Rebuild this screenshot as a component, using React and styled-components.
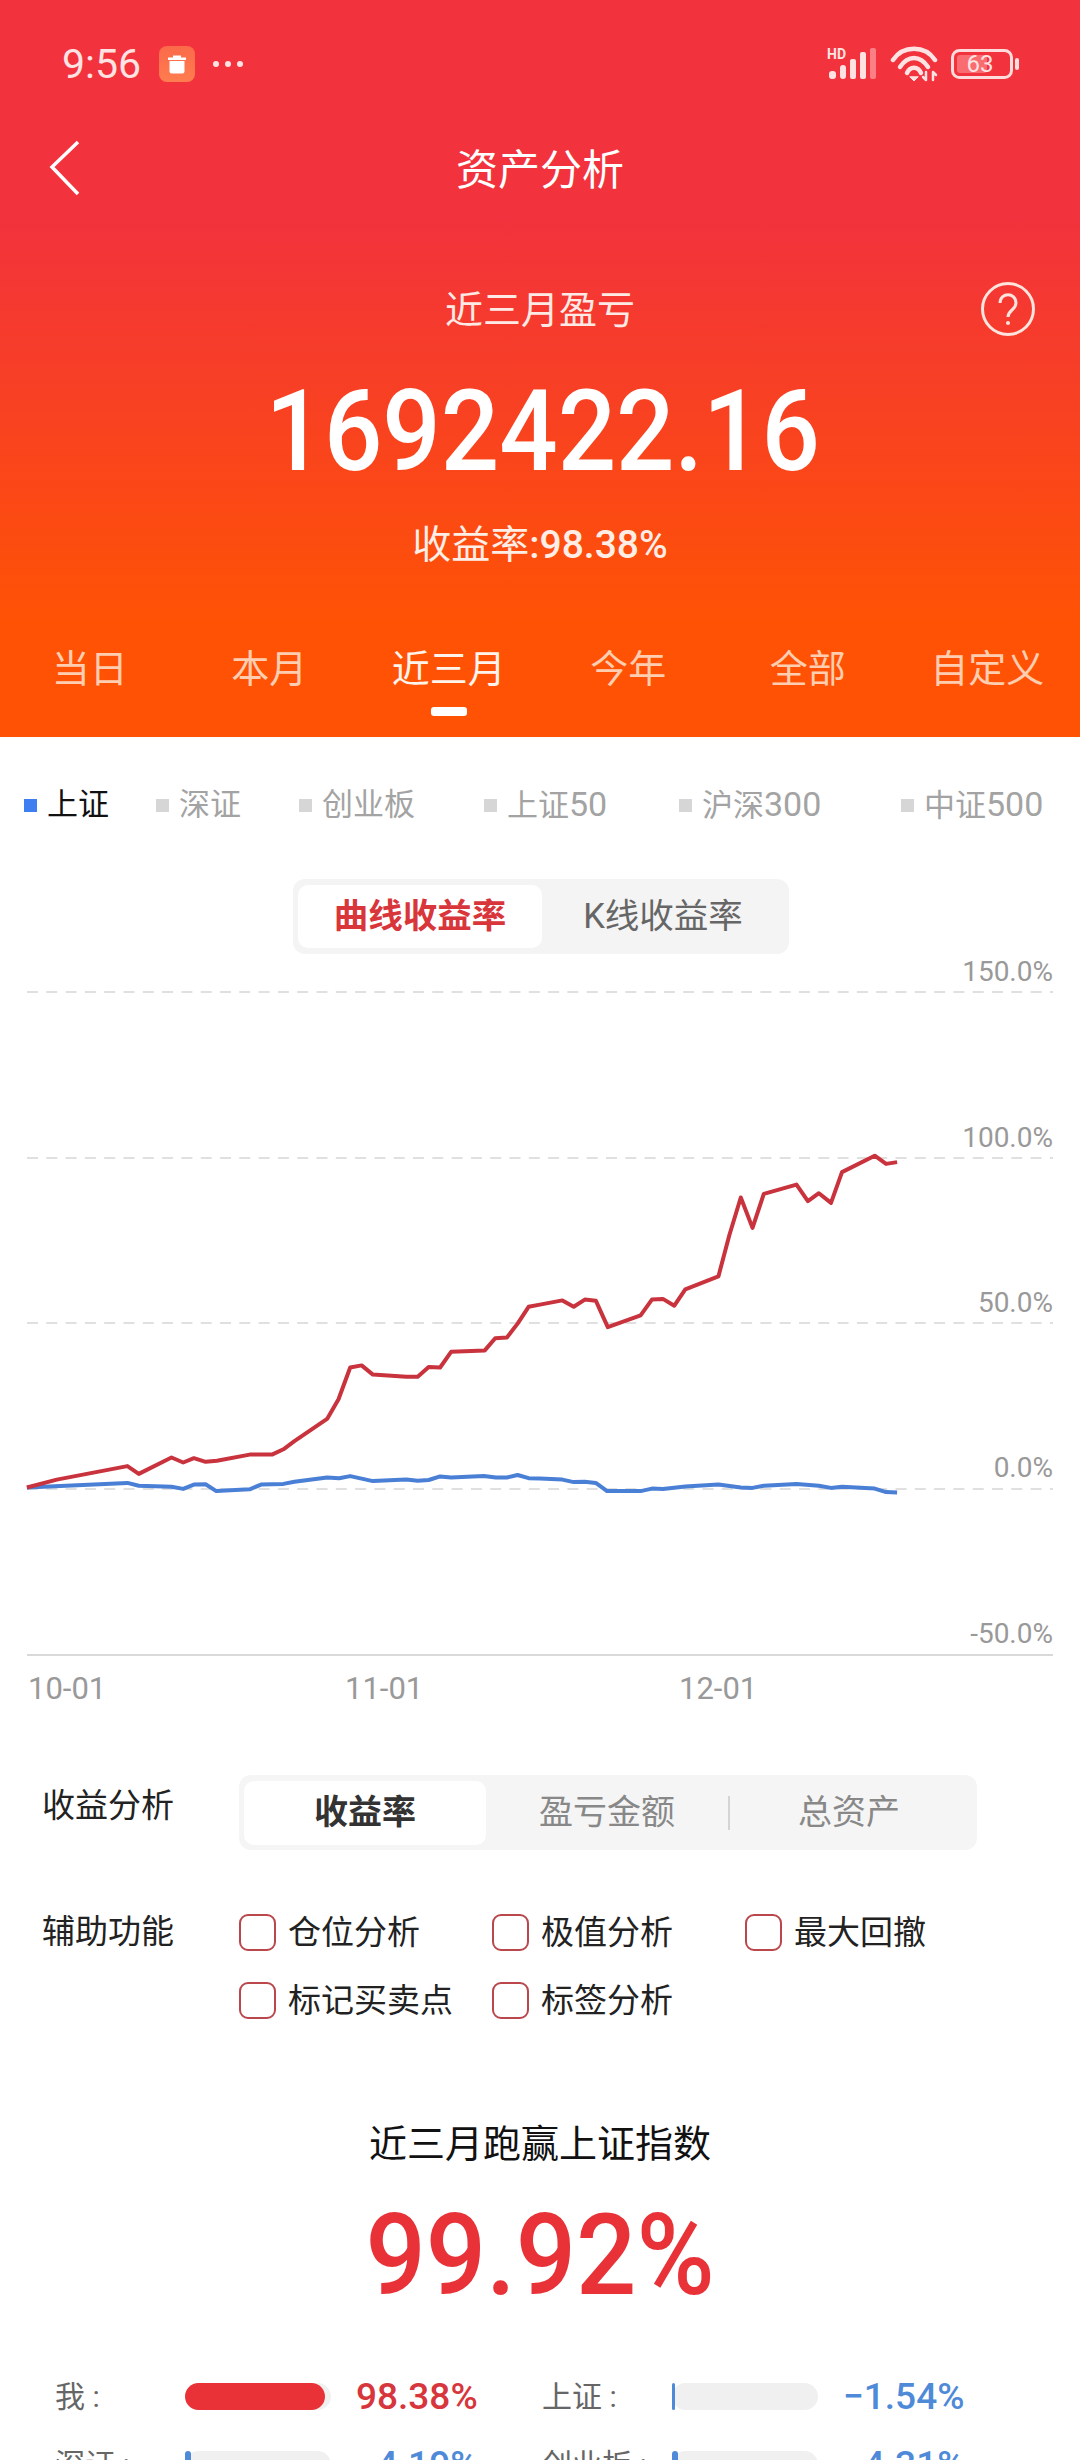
import React from "react";
import styled, { createGlobalStyle } from "styled-components";

const GlobalStyle = createGlobalStyle`
  html, body {
    margin: 0;
    padding: 0;
    background: #fff;
    overflow: hidden;
  }
  body {
    font-family: Roboto, "Noto Sans CJK SC", sans-serif;
  }
  * {
    box-sizing: border-box;
  }
`;

const Page = styled.div`
  width: 1080px;
  height: 2460px;
  overflow: hidden;
  background: #fff;
`;

const Hero = styled.header`
  height: 737px;
  color: #fff;
  background: linear-gradient(180deg, #f2323c 0, #f2323c 220px, #ff5205 620px);
`;

const StatusBar = styled.div`
  height: 128px;
  padding: 0 61px 0 62px;
  display: flex;
  align-items: center;
  justify-content: space-between;
  color: #ffe3e3;
`;

const StatusLeft = styled.div`
  display: flex;
  align-items: center;
`;

const Time = styled.span`
  font-size: 41px;
  line-height: 40px;
  width: 97px;
`;

const AppBadge = styled.span`
  width: 36px;
  height: 36px;
  border-radius: 8px;
  background: linear-gradient(180deg, #fb6a4a, #ff7d4f);
  display: flex;
`;

const Dots = styled.span`
  display: flex;
  gap: 6px;
  margin-left: 18px;
`;

const Dot = styled.i`
  width: 6px;
  height: 6px;
  border-radius: 50%;
  background: #ffe3e3;
`;

const StatusRight = styled.div`
  display: flex;
  align-items: center;
  gap: 13px;
`;

const Nav = styled.div`
  height: 80px;
  display: grid;
  grid-template-columns: 1fr auto 1fr;
  align-items: center;
`;

const BackLink = styled.span`
  display: flex;
  padding-left: 49px;
`;

const NavTitle = styled.h1`
  margin: 6px 0 0;
  font-size: 42px;
  font-weight: 400;
  line-height: 60px;
`;

const SummaryRow = styled.div`
  margin-top: 70px;
  height: 60px;
  display: grid;
  grid-template-columns: 1fr auto 1fr;
  align-items: center;
`;

const SummaryLabel = styled.div`
  grid-column: 2;
  padding-top: 2px;
  font-size: 38px;
  line-height: 60px;
  color: #ffe9e4;
`;

const HelpIcon = styled.svg`
  justify-self: end;
  margin-right: 44px;
  width: 56px;
  height: 56px;
`;

const Amount = styled.div`
  margin-top: 34px;
  padding-left: 6px;
  height: 120px;
  font-size: 113px;
  font-weight: 500;
  line-height: 120px;
  text-align: center;
  transform: scaleX(0.91);
`;

const Rate = styled.div`
  margin-top: 28px;
  height: 50px;
  font-size: 39px;
  font-weight: 500;
  line-height: 50px;
  text-align: center;
  color: #ffeee6;
`;

const RateLabel = styled.span`
  font-weight: 400;
`;

const Tabs = styled.nav`
  margin-top: 69px;
  display: grid;
  grid-template-columns: repeat(6, 179.500px);
`;

const Tab = styled.div`
  display: flex;
  flex-direction: column;
  align-items: center;
  gap: 8px;
  font-size: 38px;
  line-height: 60px;
  color: ${props => (props.$active ? "#fff4ec" : "#ffcdb0")};
`;

const TabMark = styled.i`
  width: 36px;
  height: 9px;
  border-radius: 3px;
  background: ${props => (props.$active ? "#fff" : "transparent")};
`;

const Legend = styled.div`
  margin-top: 48px;
  height: 40px;
  padding-left: 24px;
  display: flex;
  align-items: center;
`;

const LegendItem = styled.div`
  width: ${props => props.$width}px;
  flex: none;
  display: flex;
  align-items: center;
  gap: 10px;
  font-size: 31px;
  line-height: 40px;
  color: ${props => (props.$active ? "#111" : "#a3a3a3")};
`;

const LegendNumber = styled.span`
  font-size: 34px;
`;

const LegendSwatch = styled.i`
  width: 13px;
  height: 13px;
  background: ${props => (props.$active ? "#3f7ef0" : "#d6d6d6")};
`;

const ChartSwitch = styled.div`
  margin: 54px 0 0 293px;
  width: 496px;
  height: 75px;
  padding: 6px 5px;
  border-radius: 12px;
  background: #f4f4f4;
  display: grid;
  grid-template-columns: 244px 1fr;
`;

const ChartOption = styled.div`
  border-radius: 10px;
  font-size: 34.500px;
  font-weight: ${props => (props.$active ? 700 : 400)};
  line-height: 63px;
  text-align: center;
  color: ${props => (props.$active ? "#d8363b" : "#666")};
  background: ${props => (props.$active ? "#fff" : "transparent")};
`;

const Chart = styled.svg`
  display: block;
  width: 1080px;
  height: 756px;
`;

const AxisLabel = styled.text`
  font-family: Roboto, sans-serif;
  font-size: ${props => props.$size}px;
  fill: #999;
`;

const ControlRow = styled.div`
  display: grid;
  grid-template-columns: 239px 738px;
  margin-top: ${props => props.$top}px;
`;

const ControlLabel = styled.div`
  padding-left: 42px;
  font-size: 33px;
  line-height: ${props => props.$line}px;
  color: #222;
`;

const Segments = styled.div`
  height: 75px;
  padding: 5px;
  border-radius: 12px;
  background: #f5f5f5;
  display: grid;
  grid-template-columns: repeat(3, 242px);
  align-items: center;
`;

const Segment = styled.div`
  height: 64px;
  border-radius: 10px;
  font-size: 34px;
  font-weight: ${props => (props.$active ? 700 : 400)};
  line-height: 62px;
  text-align: center;
  color: ${props => (props.$active ? "#333" : "#888")};
  background: ${props => (props.$active ? "#fff" : "transparent")};
  position: relative;
  &::before {
    content: "";
    display: ${props => (props.$split ? "block" : "none")};
    position: absolute;
    left: 0;
    top: 15px;
    height: 34px;
    width: 2px;
    background: #d4d4d4;
  }
`;

const CheckGrid = styled.div`
  display: grid;
  grid-template-columns: repeat(3, 253px);
  grid-auto-rows: 68px;
`;

const CheckItem = styled.label`
  display: flex;
  align-items: center;
  gap: 12px;
  font-size: 33px;
  color: #222;
`;

const CheckText = styled.span`
  margin-bottom: 5px;
`;

const CheckBox = styled.i`
  width: 37px;
  height: 37px;
  border: 2px solid #b9474c;
  border-radius: 9px;
`;

const BeatTitle = styled.div`
  margin-top: 85px;
  height: 50px;
  font-size: 38px;
  line-height: 50px;
  text-align: center;
  color: #111;
`;

const BeatValue = styled.div`
  margin-top: 22px;
  height: 130px;
  font-size: 113px;
  font-weight: 500;
  line-height: 130px;
  text-align: center;
  color: #e83238;
  transform: scaleX(0.94);
`;

const Stats = styled.div`
  margin-top: 62px;
  padding-left: 55px;
  display: grid;
  grid-template-columns: 487px 486px;
  grid-auto-rows: 27px;
  row-gap: 41px;
`;

const Stat = styled.div`
  display: grid;
  grid-template-columns: 130px 146px 1fr;
  grid-template-rows: 27px;
  align-items: center;
`;

const StatName = styled.span`
  font-size: 30px;
  line-height: 40px;
  color: #666;
`;

const Track = styled.div`
  height: 27px;
  border-radius: 14px;
  background: #f0f0f0;
`;

const Fill = styled.div`
  height: 100%;
  border-radius: 14px;
  background: ${props => props.$color};
`;

const StatValue = styled.span`
  padding-left: 25px;
  font-size: 37px;
  font-weight: 500;
  line-height: 40px;
  white-space: nowrap;
  color: ${props => props.$color};
`;

// points read off the chart, x and y scaled back to page pixels further down
const redLeft = [[78,1477],[165,1455],[370,1417],[403,1439],[498,1393],[532,1407],[563,1395],[597,1405],[630,1402],[725,1385],[790,1385],[823,1370],[855,1347],[950,1285],[983,1230],[1017,1141],[1050,1135],[1083,1161],[1180,1167],[1213,1167],[1245,1140],[1278,1141],[1310,1097],[1408,1093],[1438,1059],[1472,1057],[1503,1018],[1535,971],[1568,965]];
const redRight = [[65,953],[98,971],[130,951],[162,954],[197,1028],[292,995],[325,951],[357,949],[390,968],[422,922],[518,886],[550,770],[583,665],[617,750],[650,655],[745,629],[778,675],[810,653],[845,680],[877,594],[972,548],[1005,571],[1037,566]];
const blueLeft = [[78,1477],[370,1464],[403,1472],[498,1475],[532,1481],[563,1469],[597,1468],[628,1487],[725,1482],[758,1469],[823,1467],[855,1461],[950,1449],[985,1451],[1017,1445],[1083,1459],[1180,1455],[1213,1458],[1245,1456],[1278,1446],[1310,1449],[1405,1445],[1440,1449],[1472,1449],[1503,1442],[1535,1451],[1568,1452]];
const blueRight = [[65,1455],[98,1462],[130,1461],[162,1464],[195,1487],[292,1487],[325,1480],[357,1481],[422,1474],[518,1469],[583,1477],[617,1478],[650,1472],[745,1467],[810,1472],[845,1478],[877,1475],[972,1480],[1005,1490],[1037,1491]];

const toLine = (left, right) =>
  [
    ...left.map(([x, y]) => [x / 2.904, 960 + y / 2.8]),
    ...right.map(([x, y]) => [540 + x / 2.904, 960 + y / 2.8])
  ]
    .map(([x, y]) => `${x.toFixed(1)},${y.toFixed(1)}`)
    .join(" ");

const legend = [
  { name: "上证", width: 132, active: true },
  { name: "深证", width: 143 },
  { name: "创业板", width: 185 },
  { name: "上证", number: "50", width: 195 },
  { name: "沪深", number: "300", width: 222 },
  { name: "中证", number: "500", width: 150 }
];

const periods = ["当日", "本月", "近三月", "今年", "全部", "自定义"];
const gridLines = [992, 1158, 1323, 1489];
const yTicks = [
  ["150.0%", 981],
  ["100.0%", 1147],
  ["50.0%", 1312],
  ["0.0%", 1477],
  ["-50.0%", 1643]
];
const xTicks = [
  ["10-01", 28],
  ["11-01", 345],
  ["12-01", 679]
];
const checks = ["仓位分析", "极值分析", "最大回撤", "标记买卖点", "标签分析"];
const stats = [
  { name: "我 :", value: "98.38%", fill: 140, color: "#e83238", text: "#d6363c" },
  { name: "上证 :", value: "−1.54%", fill: 3, color: "#4f8ad9", text: "#4f8ad9" },
  { name: "深证 :", value: "−4.19%", fill: 6, color: "#4f8ad9", text: "#4f8ad9" },
  { name: "创业板 :", value: "−4.31%", fill: 6, color: "#4f8ad9", text: "#4f8ad9" }
];

const TrashIcon = () => (
  <svg width="36" height="36" viewBox="0 0 36 36">
    <path d="M14 9.500h8v2h5v2.500H9v-2.500h5z" fill="#fff" />
    <path d="M10.500 15h15v10.500a2 2 0 0 1-2 2h-11a2 2 0 0 1-2-2z" fill="#fff" />
  </svg>
);

const SignalIcon = () => (
  <svg width="50" height="34" viewBox="0 0 50 34">
    <text x="0" y="12" fontFamily="Roboto" fontWeight="700" fontSize="14" fill="#ffe3e3">HD</text>
    <rect x="2" y="24" width="7" height="8" rx="3" fill="#ffe3e3" />
    <rect x="13" y="18" width="6" height="14" rx="3" fill="#ffe3e3" />
    <rect x="23" y="12" width="6" height="20" rx="2" fill="#ffe3e3" />
    <rect x="33" y="5" width="6" height="27" rx="2" fill="#ffe3e3" />
    <rect x="43" y="1" width="6" height="31" rx="2" fill="#fb7f84" />
  </svg>
);

const WifiIcon = () => (
  <svg width="48" height="36" viewBox="0 0 48 36" fill="none" stroke="#ffe3e3" strokeWidth="4.500" strokeLinecap="round">
    <path d="M3 14 C13 -1 35 -1 45 14" />
    <path d="M10 21 C18 9 30 9 38 21" />
    <path d="M17 27 C20 20 28 20 31 27" />
    <path d="M20 31 L24 35 L28 31 Z" fill="#ffe3e3" strokeWidth="1" />
    <path d="M36 26 v8 M36 34 l-3 -3 M43 34 v-8 M43 26 l3 3" strokeWidth="2.500" />
  </svg>
);

const BatteryIcon = () => (
  <svg width="68" height="30" viewBox="0 0 68 30">
    <rect x="1.500" y="1.500" width="59" height="27" rx="7" fill="none" stroke="#ffdcdc" strokeWidth="3" />
    <rect x="6" y="6" width="30" height="18" rx="3" fill="#f96c70" />
    <text x="29" y="23" textAnchor="middle" fontFamily="Roboto" fontSize="24" fill="#ffe3e3">63</text>
    <rect x="64" y="9" width="4" height="12" rx="2" fill="#ffdcdc" />
  </svg>
);

const BackIcon = () => (
  <svg width="32" height="56" viewBox="0 0 32 56" fill="none" stroke="#fff" strokeWidth="3.500">
    <path d="M29 2 L3 27 L29 54" />
  </svg>
);

const App = () => {
  return (
    <>
      <GlobalStyle />
      <Page>
        <Hero>
          <StatusBar>
            <StatusLeft>
              <Time>9:56</Time>
              <AppBadge>
                <TrashIcon />
              </AppBadge>
              <Dots>
                <Dot />
                <Dot />
                <Dot />
              </Dots>
            </StatusLeft>
            <StatusRight>
              <SignalIcon />
              <WifiIcon />
              <BatteryIcon />
            </StatusRight>
          </StatusBar>
          <Nav>
            <BackLink>
              <BackIcon />
            </BackLink>
            <NavTitle>资产分析</NavTitle>
          </Nav>
          <SummaryRow>
            <SummaryLabel>近三月盈亏</SummaryLabel>
            <HelpIcon viewBox="0 0 56 56" fill="none" stroke="#ffe3dd" strokeWidth="3">
              <circle cx="28" cy="28" r="25.500" />
              <path d="M20 22 C20 11 36 11 36 22 C36 29 28 29 28 36" />
              <circle cx="28" cy="42" r="2" fill="#ffe3dd" stroke="none" />
            </HelpIcon>
          </SummaryRow>
          <Amount>1692422.16</Amount>
          <Rate>
            <RateLabel>收益率</RateLabel>:98.38%
          </Rate>
          <Tabs>
            {periods.map(period => (
              <Tab key={period} $active={period === "近三月"}>
                {period}
                <TabMark $active={period === "近三月"} />
              </Tab>
            ))}
          </Tabs>
        </Hero>

        <Legend>
          {legend.map(item => (
            <LegendItem key={item.name + (item.number || "")} $width={item.width} $active={item.active}>
              <LegendSwatch $active={item.active} />
              <span>
                {item.name}
                {item.number && <LegendNumber>{item.number}</LegendNumber>}
              </span>
            </LegendItem>
          ))}
        </Legend>

        <ChartSwitch>
          <ChartOption $active>曲线收益率</ChartOption>
          <ChartOption>K线收益率</ChartOption>
        </ChartSwitch>

        <Chart viewBox="0 954 1080 756">
          {gridLines.map(y => (
            <line key={y} x1="27" x2="1053" y1={y} y2={y} stroke="#e0e0e0" strokeWidth="2" strokeDasharray="11 8.300" />
          ))}
          <line x1="27" x2="1053" y1="1655" y2="1655" stroke="#d9d9d9" strokeWidth="2" />
          {yTicks.map(([label, y]) => (
            <AxisLabel key={label} $size={28} x="1053" y={y} textAnchor="end">
              {label}
            </AxisLabel>
          ))}
          {xTicks.map(([label, x]) => (
            <AxisLabel key={label} $size={31} x={x} y="1699">
              {label}
            </AxisLabel>
          ))}
          <polyline points={toLine(blueLeft, blueRight)} fill="none" stroke="#4a7fd6" strokeWidth="4" strokeLinejoin="round" />
          <polyline points={toLine(redLeft, redRight)} fill="none" stroke="#c8333d" strokeWidth="4" strokeLinejoin="round" />
        </Chart>

        <ControlRow $top={65}>
          <ControlLabel $line={62}>收益分析</ControlLabel>
          <Segments>
            <Segment $active>收益率</Segment>
            <Segment>盈亏金额</Segment>
            <Segment $split>总资产</Segment>
          </Segments>
        </ControlRow>

        <ControlRow $top={48}>
          <ControlLabel $line={68}>辅助功能</ControlLabel>
          <CheckGrid>
            {checks.map(check => (
              <CheckItem key={check}>
                <CheckBox />
                <CheckText>{check}</CheckText>
              </CheckItem>
            ))}
          </CheckGrid>
        </ControlRow>

        <BeatTitle>近三月跑赢上证指数</BeatTitle>
        <BeatValue>99.92%</BeatValue>

        <Stats>
          {stats.map(stat => (
            <Stat key={stat.name}>
              <StatName>{stat.name}</StatName>
              <Track>
                <Fill $color={stat.color} style={{ width: stat.fill }} />
              </Track>
              <StatValue $color={stat.text}>{stat.value}</StatValue>
            </Stat>
          ))}
        </Stats>
      </Page>
    </>
  );
};

export default App;
